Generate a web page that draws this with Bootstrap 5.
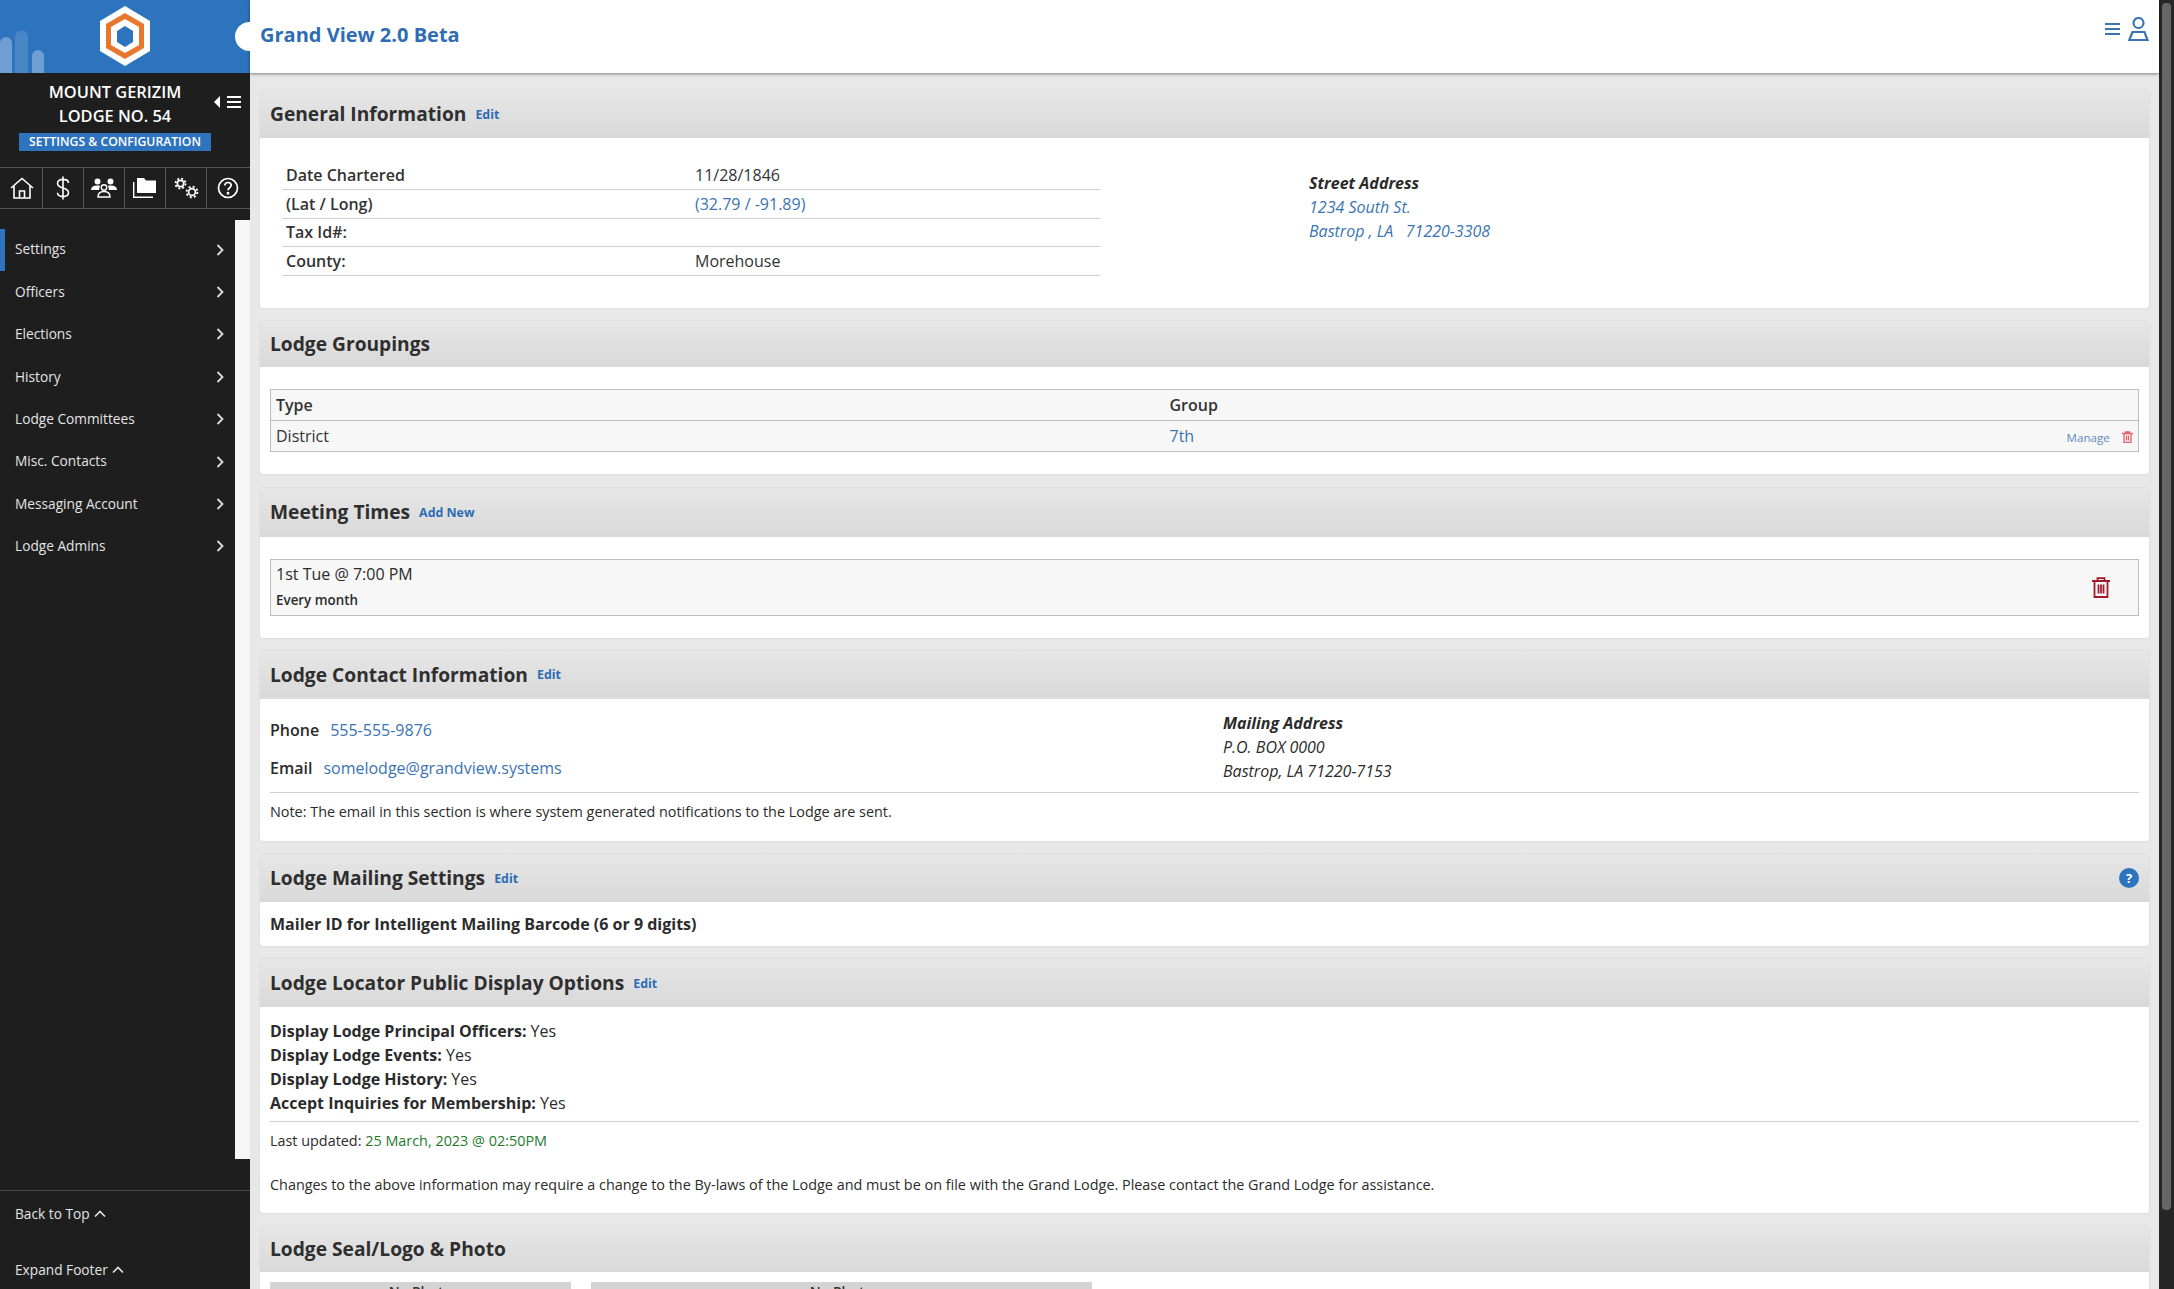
<!DOCTYPE html>
<html lang="en">

<head>
    <meta charset="UTF-8">
    <title>Grand View 2.0 Beta</title>
    <link href="https://cdn.jsdelivr.net/npm/bootstrap@5.3.3/dist/css/bootstrap.min.css" rel="stylesheet">
    <style>
        html, body { height: 100%; overflow: hidden; }
        body { font-family: "Open Sans", sans-serif; font-size: 16px; color: #2b2b2b; background: #e8e8e8; }
        a { color: #3a74b2; text-decoration: none; }
        .gv-shell { height: 100vh; }
        .gv-side { width: 250px; flex: 0 0 250px; background: #1e1e1e; color: #fff; height: 100vh; }
        .gv-side-top { display: block; height: 73px; flex: 0 0 73px; }
        .gv-lodge { flex: 0 0 94px; position: relative; }
        .gv-lodge-name { font-size: 16.4px; font-weight: 600; line-height: 24px; width: 230px; padding-top: 7px; text-align: center; }
        .gv-lodge-tag { background: #2e73bd; font-size: 12.2px; font-weight: 600; line-height: 18px; width: 192px; margin: 5px 0 0 19px; text-align: center; }
        .gv-toggle { position: absolute; left: 214px; top: 22px; }
        .gv-icons { border-top: 1px solid #555; border-bottom: 1px solid #555; flex: 0 0 42px; }
        .gv-icons > div { width: 41px; border-right: 1px solid #555; }
        .gv-icons > div:first-child { width: 43px; padding-left: 2px; }
        .gv-icons > div:last-child { border-right: 0; }
        .gv-side-mid { flex: 1 1 auto; min-height: 0; }
        .gv-menu { width: 235px; padding-top: 19.5px; }
        .gv-menu-item { height: 42.4px; padding: 0 11px 0 15px; font-size: 13.7px; color: #e4e4e4; }
        .gv-menu-item.gv-on { box-shadow: inset 5px 0 0 #2e73bd; }
        .gv-strip { width: 15px; background: #f6f6f6; height: 939px; flex: 0 0 15px; margin-top: 11px; }
        .gv-side-foot { border-top: 1px solid #4c4c4c; flex: 0 0 99px; font-size: 13.7px; color: #e4e4e4; padding: 13px 15px 0; }
        .gv-foot-gap { margin-top: 35px; }
        .gv-main { min-width: 0; height: 100vh; }
        .gv-bar { flex: 0 0 73px; background: #fff; box-shadow: 0 1px 3px rgba(0, 0, 0, .45); position: relative; z-index: 3; padding: 0 10px 0 10px; }
        .gv-bar-title { font-size: 20px; font-weight: 700; color: #2e6db4; margin-bottom: 4px; }
        .gv-bar-tools { margin-bottom: 16px; }
        .gv-knob { position: absolute; left: -15px; top: 22px; width: 15px; height: 29px; border-radius: 15px 0 0 15px; background: #fff; }
        .gv-scroll { min-height: 0; padding: 17px 10px 0; overflow: hidden; }
        .gv-card { border: 0; border-radius: 3px; margin-bottom: 13px; background: #fff; box-shadow: 0 0 2px rgba(0, 0, 0, .12); overflow: hidden; }
        .gv-card .card-header { flex: 0 0 48px; height: 48px; padding: 0 10px; background: linear-gradient(#e6e6e6, #d9d9d9); border: 0; border-radius: 0; }
        .gv-card .gv-head-low { flex-basis: 46px; height: 46px; }
        .gv-card .gv-head-tall { flex-basis: 49px; height: 49px; }
        .gv-gap-wide { margin-bottom: 14px; }
        .gv-card h5 { font-size: 19.2px; font-weight: 700; margin: 0; color: #2f2f2f; line-height: 28px; }
        .gv-edit { font-size: 12.4px; font-weight: 700; color: #2e6db4; margin: 2px 0 0 9px; }
        .gv-card .card-body { padding: 22px 10px; }
        .gv-card .gv-general { padding: 23px 10px 32px; }
        .gv-info { width: 818px; margin: 0 0 0 12px; }
        .gv-info td { padding: 0 4px; height: 28.5px; border-bottom: 1px solid #cfcfcf; font-size: 16px; color: #333; vertical-align: middle; background: transparent; }
        .gv-info td:first-child { width: 409px; font-weight: 600; }
        .gv-addr { margin-left: 209px; padding-top: 10px; font-style: italic; line-height: 24px; }
        .gv-addr b, .gv-mail b { font-weight: 700; color: #2b2b2b; }
        .gv-grid { border: 1px solid #bdbdbd; background: #f7f7f7; margin: 0; }
        .gv-grid td, .gv-grid th { background: #f7f7f7; padding: 0 5px; height: 31px; font-size: 16px; border-bottom: 1px solid #bdbdbd; vertical-align: middle; color: #333; }
        .gv-grid th { font-weight: 600; }
        .gv-grid th.gv-type { width: 894px; }
        .gv-grid tr:last-child td { border-bottom: 0; }
        .gv-manage { font-size: 11.6px; color: #5c8abb; }
        .gv-time { border: 1px solid #bdbdbd; background: #f7f7f7; height: 57px; padding: 0 28px 0 5px; }
        .gv-time strong { font-size: 13.4px; font-weight: 600; display: block; line-height: 24px; margin-top: 2px; }
        .gv-time span { line-height: 24px; display: block; }
        .gv-lbl { font-weight: 600; margin-right: 11px; }
        .gv-bold { font-weight: 700; }
        .gv-mail { font-style: italic; line-height: 24px; }
        .gv-note { font-size: 14.4px; }
        .gv-rule { margin: 0; border: 0; border-top: 1px solid #cfcfcf; opacity: 1; }
        .gv-green { color: #1e7a2a; }
        .gv-help { width: 20px; height: 20px; border-radius: 50%; background: #2e73bd; color: #fff; font-size: 13px; font-weight: 700; line-height: 20px; text-align: center; }
        .gv-card .gv-contact { padding: 12px 10px 19px; }
        .gv-contact-left { width: 953px; padding-top: 7px; }
        .gv-contact-next { margin-top: 14px; }
        .gv-contact .gv-rule { margin-top: 9px; }
        .gv-contact .gv-note { margin-top: 8px; }
        .gv-card .gv-mailer { padding: 10px; }
        .gv-card .gv-locator { padding: 12px 10px 18px; }
        .gv-locator .gv-rule { margin-top: 6px; }
        .gv-updated { margin-top: 8px; }
        .gv-changes { margin-top: 22px; }
        .gv-card .gv-seal { padding: 10px; gap: 20px; }
        .gv-photo { background: #d4d4d4; height: 40px; text-align: center; font-size: 14px; font-weight: 600; line-height: 20px; color: #333; }
        .gv-ph1 { width: 301px; }
        .gv-ph2 { width: 501px; }
        .gv-track { width: 15px; flex: 0 0 15px; background: #262626; padding: 3px 3px 0; height: 100vh; }
        .gv-thumb { background: #666; border-radius: 4px; height: 1207px; }
    </style>
</head>

<body>
    <div class="d-flex gv-shell">
        <div class="gv-side d-flex flex-column">
            <svg class="gv-side-top" width="250" height="73" viewBox="0 0 250 73">
                <rect width="250" height="73" fill="#2e73bd" />
                <path d="M0 73V43a6 6 0 0 1 12 0v30z" fill="#6f9ed2" />
                <path d="M15 73V37a6 6 0 0 1 13 0v36z" fill="#4a85c6" />
                <path d="M32 73V56a6 6 0 0 1 12 0v17z" fill="#6f9ed2" />
                <path d="M125 6 150 21V51L125 66 100 51V21z" fill="#fff" />
                <path d="M125 13 144 24V48L125 59 106 48V24z" fill="#e8772e" />
                <path d="M125 19 139 27V45L125 53 111 45V27z" fill="#fff" />
                <path d="M125 26 133 31V42L125 47 117 42V31z" fill="#2e73bd" />
            </svg>
            <div class="gv-lodge">
                <div class="gv-lodge-name">MOUNT GERIZIM<br>LODGE NO. 54</div>
                <div class="gv-lodge-tag">SETTINGS &amp; CONFIGURATION</div>
                <svg class="gv-toggle" width="28" height="14" viewBox="0 0 28 14">
                    <path d="M6 1v12L0 7z" fill="#fff" />
                    <path d="M13 2h14M13 7h14M13 12h14" stroke="#fff" stroke-width="2" />
                </svg>
            </div>
            <div class="gv-icons d-flex">
                <div class="d-flex align-items-center justify-content-center"><svg width="24" height="22" viewBox="0 0 24 22" fill="none" stroke="#fff" stroke-width="1.6"><path d="M1 11 12 1.5 23 11M4 9v12h16V9M9.5 21v-7h5v7" /></svg></div>
                <div class="d-flex align-items-center justify-content-center"><svg width="14" height="24" viewBox="0 0 14 24" fill="none" stroke="#fff" stroke-width="1.6"><path d="M12.5 7c0-2.5-2.4-3.6-5.5-3.6S1.5 4.8 1.5 7.4c0 5.6 11 3.4 11 9.200 0 2.600-2.400 4-5.500 4s-5.500-1.300-5.500-3.800M7 .5v23" /></svg></div>
                <div class="d-flex align-items-center justify-content-center"><svg width="26" height="20" viewBox="0 0 26 20" fill="#fff"><circle cx="6.500" cy="3.500" r="3" /><circle cx="19.500" cy="3.500" r="3" /><path d="M0 12c0-3 2-4.500 6-4.500h3L8 12zM26 12c0-3-2-4.500-6-4.500h-3l1 4.500z" /><circle cx="13" cy="9.500" r="2.700" fill="none" stroke="#fff" stroke-width="1.400" /><path d="M7 19c0-4 2-5.500 6-5.500s6 1.500 6 5.500z" fill="none" stroke="#fff" stroke-width="1.400" /></svg></div>
                <div class="d-flex align-items-center justify-content-center"><svg width="24" height="20" viewBox="0 0 24 20" fill="#fff"><path d="M4 0h7l2 2.500h10V15H4z" /><path d="M.7 4v15.300H20" fill="none" stroke="#fff" stroke-width="1.400" /></svg></div>
                <div class="d-flex align-items-center justify-content-center"><svg width="25" height="22" viewBox="0 0 25 22" fill="none" stroke="#fff"><circle cx="6.500" cy="6.500" r="3.200" stroke-width="1.700" /><circle cx="6.500" cy="6.500" r="5" stroke-width="1.800" stroke-dasharray="2 1.930" /><circle cx="18" cy="15" r="3.400" stroke-width="1.700" /><circle cx="18" cy="15" r="5.400" stroke-width="1.800" stroke-dasharray="2.100 2.140" /></svg></div>
                <div class="d-flex align-items-center justify-content-center"><svg width="22" height="22" viewBox="0 0 22 22" fill="none" stroke="#fff" stroke-width="1.700"><circle cx="11" cy="11" r="9.500" /><path d="M7.800 8.500c0-1.800 1.400-3 3.200-3s3.200 1.100 3.200 2.800c0 2.500-3.200 2.400-3.200 5" /><circle cx="11" cy="16.300" r=".6" /></svg></div>
            </div>
            <div class="gv-side-mid d-flex">
                <div class="gv-menu flex-grow-1">
                    <div class="gv-menu-item gv-on d-flex align-items-center justify-content-between"><span>Settings</span><svg width="8" height="12" viewBox="0 0 8 12" fill="none" stroke="#ddd" stroke-width="1.800"><path d="M1.500 1 6.500 6 1.500 11" /></svg></div>
                    <div class="gv-menu-item d-flex align-items-center justify-content-between"><span>Officers</span><svg width="8" height="12" viewBox="0 0 8 12" fill="none" stroke="#ddd" stroke-width="1.800"><path d="M1.500 1 6.500 6 1.500 11" /></svg></div>
                    <div class="gv-menu-item d-flex align-items-center justify-content-between"><span>Elections</span><svg width="8" height="12" viewBox="0 0 8 12" fill="none" stroke="#ddd" stroke-width="1.800"><path d="M1.500 1 6.500 6 1.500 11" /></svg></div>
                    <div class="gv-menu-item d-flex align-items-center justify-content-between"><span>History</span><svg width="8" height="12" viewBox="0 0 8 12" fill="none" stroke="#ddd" stroke-width="1.800"><path d="M1.500 1 6.500 6 1.500 11" /></svg></div>
                    <div class="gv-menu-item d-flex align-items-center justify-content-between"><span>Lodge Committees</span><svg width="8" height="12" viewBox="0 0 8 12" fill="none" stroke="#ddd" stroke-width="1.800"><path d="M1.500 1 6.500 6 1.500 11" /></svg></div>
                    <div class="gv-menu-item d-flex align-items-center justify-content-between"><span>Misc. Contacts</span><svg width="8" height="12" viewBox="0 0 8 12" fill="none" stroke="#ddd" stroke-width="1.800"><path d="M1.500 1 6.500 6 1.500 11" /></svg></div>
                    <div class="gv-menu-item d-flex align-items-center justify-content-between"><span>Messaging Account</span><svg width="8" height="12" viewBox="0 0 8 12" fill="none" stroke="#ddd" stroke-width="1.800"><path d="M1.500 1 6.500 6 1.500 11" /></svg></div>
                    <div class="gv-menu-item d-flex align-items-center justify-content-between"><span>Lodge Admins</span><svg width="8" height="12" viewBox="0 0 8 12" fill="none" stroke="#ddd" stroke-width="1.800"><path d="M1.500 1 6.500 6 1.500 11" /></svg></div>
                </div>
                <div class="gv-strip"></div>
            </div>
            <div class="gv-side-foot d-flex flex-column">
                <div class="d-flex align-items-center gap-1">Back to Top <svg width="12" height="8" viewBox="0 0 12 8" fill="none" stroke="#e4e4e4" stroke-width="1.600"><path d="M1 6.500 6 1.500 11 6.500" /></svg></div>
                <div class="d-flex align-items-center gap-1 gv-foot-gap">Expand Footer <svg width="12" height="8" viewBox="0 0 12 8" fill="none" stroke="#e4e4e4" stroke-width="1.600"><path d="M1 6.500 6 1.500 11 6.500" /></svg></div>
            </div>
        </div>

        <div class="gv-main flex-grow-1 d-flex flex-column">
            <div class="gv-bar d-flex align-items-center justify-content-between">
                <div class="gv-knob"></div>
                <div class="gv-bar-title">Grand View 2.0 Beta</div>
                <div class="d-flex align-items-center gap-2 gv-bar-tools">
                    <svg width="15" height="14" viewBox="0 0 15 14" stroke="#3a74b2" stroke-width="1.800"><path d="M0 2h15M0 7h15M0 12h15" /></svg>
                    <svg width="21" height="24" viewBox="0 0 21 24" fill="none" stroke="#3a74b2" stroke-width="2.200"><circle cx="10.500" cy="6" r="5" /><path d="M4.500 15h12l3 8H1.300z" /></svg>
                </div>
            </div>
            <div class="gv-scroll flex-grow-1">
                <div class="card gv-card">
                    <div class="card-header d-flex align-items-center"><h5>General Information</h5><a class="gv-edit" href="#">Edit</a></div>
                    <div class="card-body d-flex gv-general">
                        <table class="gv-info">
                            <tr><td>Date Chartered</td><td>11/28/1846</td></tr>
                            <tr><td>(Lat / Long)</td><td><a href="#">(32.79 / -91.89)</a></td></tr>
                            <tr><td>Tax Id#:</td><td></td></tr>
                            <tr><td>County:</td><td>Morehouse</td></tr>
                        </table>
                        <div class="gv-addr"><b>Street Address</b><br><a href="#">1234 South St.<br>Bastrop , LA &nbsp; 71220-3308</a></div>
                    </div>
                </div>

                <div class="card gv-card gv-gap-wide">
                    <div class="card-header gv-head-low d-flex align-items-center"><h5>Lodge Groupings</h5></div>
                    <div class="card-body">
                        <table class="table gv-grid">
                            <tr><th class="gv-type">Type</th><th>Group</th><th></th></tr>
                            <tr><td>District</td><td><a href="#">7th</a></td><td class="text-end"><a class="gv-manage" href="#">Manage</a>
                                <svg class="ms-2" width="11" height="12" viewBox="0 0 11 12" fill="none" stroke="#e4606d" stroke-width="1.300"><path d="M0 2.500h11M3.500 2.500V1h4v1.500M2 2.500v9h7v-9M4.500 4.500v5M6.500 4.500v5" /></svg></td></tr>
                        </table>
                    </div>
                </div>

                <div class="card gv-card">
                    <div class="card-header gv-head-tall d-flex align-items-center"><h5>Meeting Times</h5><a class="gv-edit" href="#">Add New</a></div>
                    <div class="card-body">
                        <div class="gv-time d-flex align-items-center justify-content-between">
                            <div><span>1st Tue @ 7:00 PM</span><strong>Every month</strong></div>
                            <svg width="18" height="21" viewBox="0 0 18 21" fill="none" stroke="#a3192a" stroke-width="1.800"><path d="M0 4h18M5.500 4V1.200h7V4M2.500 4v16h13V4M6.500 7.500v9M9 7.500v9M11.500 7.500v9" /></svg>
                        </div>
                    </div>
                </div>

                <div class="card gv-card">
                    <div class="card-header d-flex align-items-center"><h5>Lodge Contact Information</h5><a class="gv-edit" href="#">Edit</a></div>
                    <div class="card-body gv-contact">
                        <div class="d-flex">
                            <div class="gv-contact-left">
                                <div><span class="gv-lbl">Phone</span><a href="#">555-555-9876</a></div>
                                <div class="gv-contact-next"><span class="gv-lbl">Email</span><a href="#">somelodge@grandview.systems</a></div>
                            </div>
                            <div class="gv-mail"><b>Mailing Address</b><br>P.O. BOX 0000<br>Bastrop, LA 71220-7153</div>
                        </div>
                        <hr class="gv-rule">
                        <div class="gv-note">Note: The email in this section is where system generated notifications to the Lodge are sent.</div>
                    </div>
                </div>

                <div class="card gv-card">
                    <div class="card-header d-flex align-items-center justify-content-between"><div class="d-flex align-items-center"><h5>Lodge Mailing Settings</h5><a class="gv-edit" href="#">Edit</a></div><div class="gv-help">?</div></div>
                    <div class="card-body gv-bold gv-mailer">Mailer ID for Intelligent Mailing Barcode (6 or 9 digits)</div>
                </div>

                <div class="card gv-card">
                    <div class="card-header d-flex align-items-center"><h5>Lodge Locator Public Display Options</h5><a class="gv-edit" href="#">Edit</a></div>
                    <div class="card-body gv-locator">
                        <div><span class="gv-bold">Display Lodge Principal Officers:</span> Yes</div>
                        <div><span class="gv-bold">Display Lodge Events:</span> Yes</div>
                        <div><span class="gv-bold">Display Lodge History:</span> Yes</div>
                        <div><span class="gv-bold">Accept Inquiries for Membership:</span> Yes</div>
                        <hr class="gv-rule">
                        <div class="gv-note gv-updated">Last updated: <span class="gv-green">25 March, 2023 @ 02:50PM</span></div>
                        <div class="gv-note gv-changes">Changes to the above information may require a change to the By-laws of the Lodge and must be on file with the Grand Lodge. Please contact the Grand Lodge for assistance.</div>
                    </div>
                </div>

                <div class="card gv-card">
                    <div class="card-header gv-head-low d-flex align-items-center"><h5>Lodge Seal/Logo &amp; Photo</h5></div>
                    <div class="card-body d-flex gv-seal">
                        <div class="gv-photo gv-ph1">No Photo</div>
                        <div class="gv-photo gv-ph2">No Photo</div>
                    </div>
                </div>
            </div>
        </div>
        <div class="gv-track"><div class="gv-thumb"></div></div>
    </div>

    <script src="https://cdn.jsdelivr.net/npm/bootstrap@5.3.3/dist/js/bootstrap.bundle.min.js"></script>
</body>

</html>
